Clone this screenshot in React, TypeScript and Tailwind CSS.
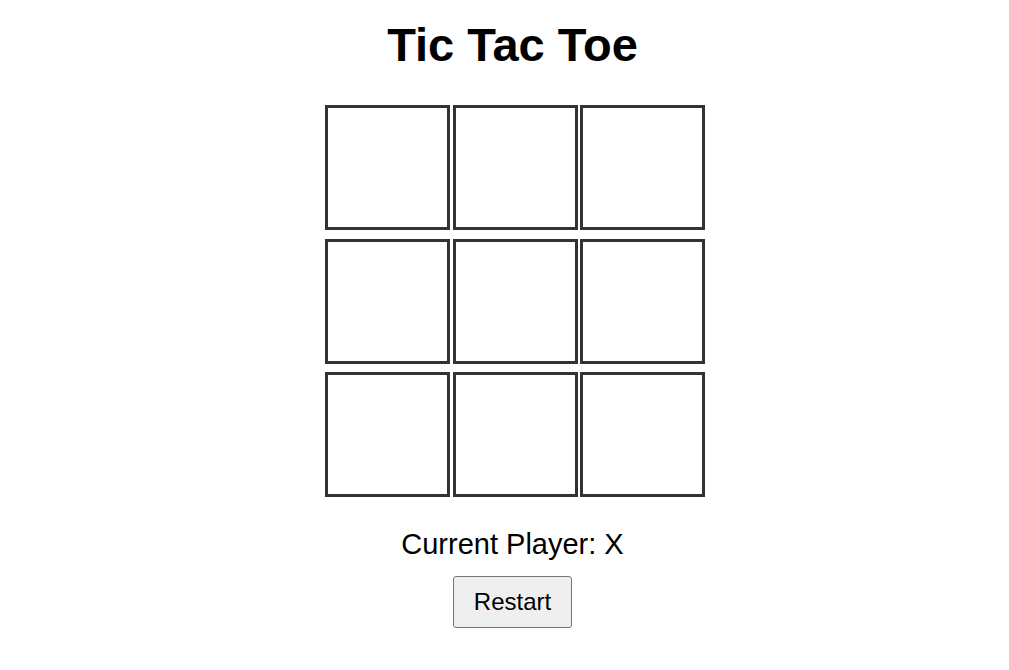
import { useState } from 'react';

type Cell = 'X' | 'O' | null;

const lines = [
  [0, 1, 2], [3, 4, 5], [6, 7, 8],
  [0, 3, 6], [1, 4, 7], [2, 5, 8],
  [0, 4, 8], [2, 4, 6],
];

function getWinner(board: Cell[]) {
  for (const [a, b, c] of lines) {
    if (board[a] && board[a] === board[b] && board[a] === board[c]) return board[a];
  }
  return null;
}

export default function App() {
  const [board, setBoard] = useState<Cell[]>(Array(9).fill(null));
  const [player, setPlayer] = useState<'X' | 'O'>('X');

  const winner = getWinner(board);

  const play = (i: number) => {
    if (board[i] || winner) return;
    const next = board.slice();
    next[i] = player;
    setBoard(next);
    setPlayer(player === 'X' ? 'O' : 'X');
  };

  const restart = () => {
    setBoard(Array(9).fill(null));
    setPlayer('X');
  };

  return (
    <div className="min-h-screen bg-white pl-4 flex flex-col items-center text-black font-['Liberation_Sans',Arial,sans-serif]">
      <h1 className="pt-[17px] text-[47px] leading-[56px] font-bold">Tic Tac Toe</h1>

      <div className="mt-[32px] ml-[5px] grid grid-cols-[125px_125px_125px] gap-x-[2.5px] gap-y-[8.5px]">
        {board.map((cell, i) => (
          <button
            key={i}
            onClick={() => play(i)}
            className="w-[125px] h-[125px] border-[3px] border-[#333333] bg-white text-[48px] font-bold flex items-center justify-center"
          >
            {cell}
          </button>
        ))}
      </div>

      <p className="mt-[31px] text-[29px] leading-[33px]">
        {winner ? `Winner: ${winner}` : `Current Player: ${player}`}
      </p>

      <button
        onClick={restart}
        className="mt-[15px] px-[20px] py-[11px] text-[24px] leading-[28px] bg-[#efefef] border border-[#767676] rounded-[3px] hover:bg-[#e5e5e5]"
      >
        Restart
      </button>
    </div>
  );
}
